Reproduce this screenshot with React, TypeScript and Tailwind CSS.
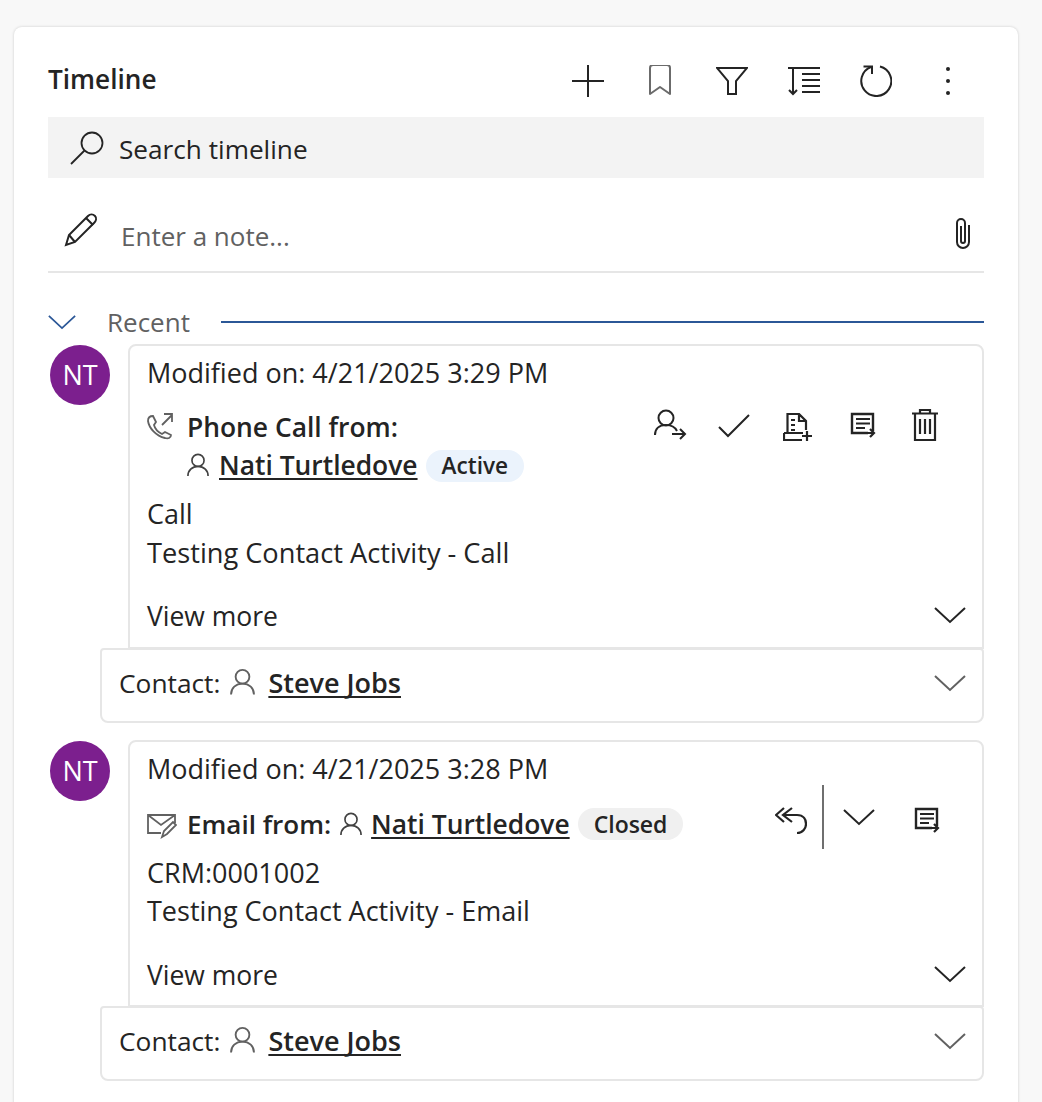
import React from "react";

const S = ({ w = 32, h = 32, c = "#242424", sw = 2, children, vb }: any) => (
  <svg width={w} height={h} viewBox={vb || `0 0 ${w} ${h}`} fill="none" stroke={c} strokeWidth={sw} className="shrink-0 block">
    {children}
  </svg>
);

const Person = ({ c = "#424242", w = 22, h = 24 }: any) => (
  <S w={w} h={h} vb="0 0 24 26" c={c} sw={1.8}>
    <circle cx="12" cy="8" r="6.6" />
    <path d="M1 25c0-6 4.500-10.500 11-10.500S23 19 23 25" />
  </S>
);

const Chevron = ({ c = "#242424", w = 32 }: any) => (
  <S w={w} h={18} vb="0 0 32 18" c={c} sw={2}>
    <path d="M1 2l15 14L31 2" />
  </S>
);

const ForwardNote = () => (
  <S w={26} h={28} vb="0 0 26 28" sw={2}>
    <path d="M23 19V2H2v19h16" strokeWidth={2.4} />
    <path d="M6 7h14M6 11.500h14M6 16h9" strokeWidth={2.2} />
    <path d="M14 21h10M20 17l4 4-4 4" strokeWidth={2.2} />
  </S>
);

const Contact = () => (
  <div className="flex h-[75px] items-center rounded-b-lg rounded-t-sm border-2 border-[#e6e6e6] bg-white pl-[17px] pr-[16px] pb-[6px] -mt-[1px] ml-[52px] text-[26.300px]">
    <span className="text-[#242424]">Contact:</span>
    <span className="ml-[10px] mr-[13px] -mt-[2px]"><Person c="#616161" w={25} h={28} /></span>
    <a className="text-[27px] font-semibold text-[#242424] underline underline-offset-[3px] decoration-2 [text-decoration-skip-ink:none]">Steve Jobs</a>
    <span className="ml-auto"><Chevron c="#616161" /></span>
  </div>
);

const Avatar = () => (
  <div className="mt-[1px] flex h-[60px] w-[60px] shrink-0 items-center justify-center rounded-full bg-[#7c1f8e] text-[27px] text-white">NT</div>
);

const ViewMore = () => (
  <div className="flex items-center justify-between pr-[16px] text-[26.500px] text-[#242424]">
    <span>View more</span>
    <span className="-mt-[3px]"><Chevron /></span>
  </div>
);

const Name = () => (
  <a className="text-[26.400px] font-semibold underline underline-offset-[3px] decoration-2 [text-decoration-skip-ink:none]">Nati Turtledove</a>
);

export default function App() {
  return (
    <div
      className="h-[1102px] overflow-hidden bg-[#f8f8f8] pl-[14px] pr-[24px] pt-[27px] text-[27px] leading-[38px]"
      style={{ fontFamily: '"Open Sans", "Noto Sans", sans-serif' }}
    >
      <div className="h-[1100px] rounded-lg bg-white px-[34px] shadow-[0_0_3px_rgba(0,0,0,0.18)]">
        <div className="flex h-[90px] items-center">
          <h1 className="pt-[14px] text-[26.200px] font-semibold text-[#242424]">Timeline</h1>
          <div className="ml-auto mr-[20px] flex items-center gap-[40px] pt-[18px]">
            <S><path d="M16 0v32M0 16h32" /></S>
            <S c="#6b6b6b" vb="0 0 32 32"><path d="M6 3c0-2 1-3 3-3h14c2 0 3 1 3 3v26l-10-7-10 7z" strokeLinejoin="round" /></S>
            <S vb="0 0 32 32"><path d="M1 3h30L20 16v13h-8V16z" /></S>
            <S vb="0 0 32 32"><path d="M0 3h32M14 9h18M14 15h18M14 21h18M14 27h18" /><path d="M5 3v26M1 25l4 4 4-4" /></S>
            <S vb="0 0 32 32"><path d="M20 1.500A15 15 0 1 1 11 2" /><path d="M3.500 1.500H12V9" /></S>
            <svg width="32" height="32" viewBox="0 0 32 32" fill="#242424" className="block shrink-0"><circle cx="16" cy="4" r="2" /><circle cx="16" cy="16" r="2" /><circle cx="16" cy="28" r="2" /></svg>
          </div>
        </div>

        <div className="flex h-[61px] items-center bg-[#f3f3f3] pl-[22px] text-[#242424]">
          <S w={34} h={34} vb="0 0 34 34" sw={1.8}><circle cx="22" cy="12" r="10.500" /><path d="M14.500 19.500L1 33" /></S>
          <span className="ml-[15px] pt-[2px] text-[26.200px]">Search timeline</span>
        </div>

        <div className="flex h-[95px] items-center border-b-2 border-[#e6e6e6] pl-[16px] pr-[14px] pt-[10px] text-[26px] text-[#616161]">
          <S w={34} h={34} vb="0 0 34 34" sw={2}><path d="M2 32l3-10L24 3c2-2 5-2 7 0s1 5-1 7L11 29z" /><path d="M5 22l6 7M22 5l7 7" /></S>
          <span className="ml-[23px] mt-[12px]">Enter a note...</span>
          <span className="ml-auto mt-[6px]"><S w={14} h={32} vb="0 0 14 32" sw={2}><path d="M13 8V25a6 6 0 0 1-12 0V6a4 4 0 0 1 8 0V24a2 2 0 0 1-4 0V9" /></S></span>
        </div>

        <div className="flex h-[72px] items-center pt-[26px] text-[26px] text-[#616161]">
          <Chevron c="#2b5797" w={28} />
          <span className="ml-[31px]">Recent</span>
          <div className="ml-[31px] h-[2px] flex-1 bg-[#2b5797]" />
        </div>

        <div className="flex items-start gap-[18px] pl-[2px] -mt-[1px]">
          <Avatar />
          <div className="h-[305px] flex-1 rounded-t-lg border-2 border-[#e6e6e6] bg-white pl-[17px] pt-[8px] text-[#242424]">
            <div>Modified on: 4/21/2025 3:29 PM</div>
            <div className="mt-[16px] flex">
              <div className="w-[40px] pt-[4px]">
                <S w={26} h={28} vb="0 0 26 28" c="#616161" sw={1.8}>
                  <path d="M6 4l3 6-2 3c1 4 4 7 8 9l3-2 6 3c0 3-3 4-6 3C9 24 2 16 1 9c0-3 2-5 5-5z" />
                  <path d="M15 13L25 3M17 2h8v8" />
                </S>
              </div>
              <div className="flex-1 text-[26.400px]">
                <div className="font-semibold">Phone Call from:</div>
                <div className="flex items-center">
                  <Person />
                  <span className="ml-[10px]"><Name /></span>
                  <span className="ml-[8px] mt-[1px] flex h-[32px] items-center rounded-full bg-[#ebf3fc] px-[16px] text-[22.600px] font-semibold">Active</span>
                </div>
              </div>
              <div className="flex items-start pr-[44px] pt-[1px]">
                <S w={34} h={32} vb="0 0 34 32"><circle cx="12" cy="9" r="7.500" /><path d="M1 26c0-6 4-10 11-10 5 0 9 2 11 6M18 25h13M26 20l5 5-5 5" /></S>
                <span className="ml-[30px] mt-[4px]"><S w={32} h={26} vb="0 0 32 26"><path d="M1 14l9 9L31 2" /></S></span>
                <span className="ml-[33px] mt-[4px]"><S w={30} h={30} vb="0 0 30 30" sw={2.2}><path d="M4.500 20V1H16l7 7v9M16 1v7h7M8 7h4M8 12h4M8 17h4M1 20h19M1 20v7h18M19 23h10M24 18v10" /></S></span>
                <span className="ml-[37px] mt-[3px]"><ForwardNote /></span>
                <span className="ml-[36px]"><S w={26} h={33} vb="0 0 26 33" sw={2.2}><path d="M0 4.500h26M8 4.500V1h10v3.500M3 4.500V31h20V4.500M8 10v15M13 10v15M18 10v15" /></S></span>
              </div>
            </div>
            <div className="mt-[11px]">Call</div>
            <div className="mt-[1px] text-[27.200px]">Testing Contact Activity - Call</div>
            <div className="mt-[25px]"><ViewMore /></div>
          </div>
        </div>
        <Contact />

        <div className="mt-[17px] flex items-start gap-[18px] pl-[2px]">
          <Avatar />
          <div className="h-[267px] flex-1 rounded-t-lg border-2 border-[#e6e6e6] bg-white pl-[17px] pt-[8px] text-[#242424]">
            <div>Modified on: 4/21/2025 3:28 PM</div>
            <div className="mt-[17px] flex h-[38px] items-center text-[26.400px]">
              <div className="w-[40px] pt-[3px]">
                <S w={30} h={26} vb="0 0 30 26" c="#616161" sw={1.8}>
                  <path d="M14 20H1V2h27v8M1 2l13 10L28 2" />
                  <path d="M15 24l2-6 9-9 3 3-9 9z" />
                </S>
              </div>
              <span className="text-[26px] font-semibold">Email from:</span>
              <span className="ml-[9px]"><Person /></span>
              <span className="ml-[9px]"><Name /></span>
              <span className="ml-[8px] flex h-[32px] items-center rounded-full bg-[#f0f0f0] px-[16px] text-[23px] font-semibold">Closed</span>
              <div className="ml-auto mr-[42px] -mt-[14px] flex items-center">
                <span className="mt-[7px]"><S w={32} h={30} vb="0 0 32 30" sw={2.2}><path d="M9 2L1 9l8 7M17 2L8 9l9 7M8 9h14c7 0 9 5 9 9s-3 9-9 9" /></S></span>
                <div className="ml-[15px] mr-[19px] h-[64px] w-[2px] bg-[#6f6f6f]" />
                <Chevron />
                <span className="ml-[39px] mt-[8px]"><ForwardNote /></span>
              </div>
            </div>
            <div className="mt-[11px]">CRM:0001002</div>
            <div>Testing Contact Activity - Email</div>
            <div className="mt-[26px]"><ViewMore /></div>
          </div>
        </div>
        <Contact />
      </div>
    </div>
  );
}
